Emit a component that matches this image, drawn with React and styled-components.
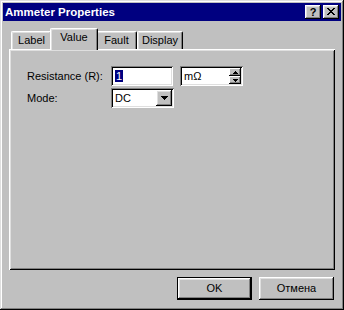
import React from 'react';
import styled, { createGlobalStyle } from 'styled-components';

const Global = createGlobalStyle`
  html, body { margin: 0; padding: 0; background: #c0c0c0; }
  body { font-family: "Liberation Sans", Arial, sans-serif; font-size: 11px; color: #000; }
  * { box-sizing: border-box; }
`;

const raisedShadow = 'inset -1px -1px #000, inset 1px 1px #fff, inset -2px -2px #808080, inset 2px 2px #dfdfdf';
const sunkenShadow = 'inset 1px 1px #808080, inset -1px -1px #fff, inset 2px 2px #000, inset -2px -2px #dfdfdf';

const Window = styled.div`
  width: 344px;
  height: 310px;
  padding: 3px;
  background: #c0c0c0;
  box-shadow: inset -1px -1px #000, inset 1px 1px #dfdfdf, inset -2px -2px #808080, inset 2px 2px #fff;
  display: flex;
  flex-direction: column;
`;

const TitleBar = styled.div`
  height: 18px;
  background: #000080;
  display: flex;
  align-items: center;
  padding: 0 2px;
  gap: 2px;
`;

const Title = styled.div`
  flex: 1;
  color: #fff;
  font-weight: bold;
  font-size: 11.5px;
  line-height: 18px;
  white-space: nowrap;
`;

const CaptionButton = styled.div`
  width: 16px;
  height: 14px;
  background: #c0c0c0;
  box-shadow: ${raisedShadow};
  display: flex;
  align-items: center;
  justify-content: center;
  font-weight: bold;
  font-size: 11px;
  line-height: 14px;
  padding-bottom: 1px;
`;

const Body = styled.div`
  flex: 1;
  display: flex;
  flex-direction: column;
  padding: 7px 6px 7px 6px;
`;

const TabStrip = styled.div`
  height: 21px;
  display: flex;
  align-items: flex-end;
  padding-left: 2px;
`;

const Tab = styled.div`
  position: relative;
  width: ${p => (p.$active ? p.$w + 4 : p.$w)}px;
  height: ${p => (p.$active ? 22 : 18)}px;
  margin: ${p => (p.$active ? '0 -2px -1px -2px' : '0')};
  z-index: ${p => (p.$active ? 2 : 1)};
  background: #c0c0c0;
  border-top: 1px solid #fff;
  border-left: 1px solid #fff;
  border-right: 1px solid #000;
  border-radius: 2px 2px 0 0;
  box-shadow: inset -1px 0 #808080, inset 1px 1px #dfdfdf;
  text-align: center;
  padding-top: 2px;
  line-height: 13px;
  white-space: nowrap;
`;

const Panel = styled.div`
  height: 221px;
  background: #c0c0c0;
  box-shadow: inset 1px 1px #fff, inset -1px -1px #000, inset 2px 2px #dfdfdf, inset -2px -2px #808080;
  padding: 17px 0 0 18px;
  display: flex;
  flex-direction: column;
  gap: 2px;
`;

const Row = styled.div`
  display: flex;
  align-items: center;
  height: 20px;
`;

const FieldLabel = styled.div`
  width: 84px;
  white-space: nowrap;
`;

const TextBox = styled.div`
  width: ${p => p.$w}px;
  height: 20px;
  background: #fff;
  box-shadow: ${sunkenShadow};
  padding: 2px;
  display: flex;
  align-items: center;
  margin-left: ${p => p.$ml || 0}px;
`;

const Selected = styled.span`
  background: #000080;
  color: #fff;
  line-height: 14px;
  padding: 0 1px;
`;

const FieldText = styled.span`
  flex: 1;
  padding-left: 2px;
  line-height: 14px;
  white-space: nowrap;
`;

const Spinner = styled.div`
  width: 12px;
  height: 16px;
  display: flex;
  flex-direction: column;
`;

const SpinButton = styled.div`
  height: 8px;
  background: #c0c0c0;
  box-shadow: inset -1px -1px #000, inset 1px 1px #fff, inset -2px -2px #808080;
  display: flex;
  align-items: center;
  justify-content: center;
`;

const DropButton = styled.div`
  width: 16px;
  height: 16px;
  background: #c0c0c0;
  box-shadow: ${raisedShadow};
  display: flex;
  align-items: center;
  justify-content: center;
`;

const Footer = styled.div`
  display: flex;
  justify-content: flex-end;
  gap: 7px;
  margin-top: 7px;
  padding-right: 1px;
`;

const Button = styled.div`
  width: 75px;
  height: 23px;
  background: #c0c0c0;
  border: ${p => (p.$default ? '1px solid #000' : 'none')};
  box-shadow: ${raisedShadow};
  display: flex;
  align-items: center;
  justify-content: center;
  line-height: 13px;
`;

const ArrowDown = ({ w = 7, h = 4 }) => (
  <svg width={w} height={h} viewBox={`0 0 ${w} ${h}`} shapeRendering="crispEdges">
    <polygon points={`0,0 ${w},0 ${w / 2},${h}`} fill="#000" />
  </svg>
);

const ArrowUp = ({ w = 5, h = 3 }) => (
  <svg width={w} height={h} viewBox={`0 0 ${w} ${h}`} shapeRendering="crispEdges">
    <polygon points={`0,${h} ${w},${h} ${w / 2},0`} fill="#000" />
  </svg>
);

const CloseGlyph = () => (
  <svg width="8" height="7" viewBox="0 0 8 7" shapeRendering="crispEdges">
    <path d="M0 0h2l2 2.3L6 0h2L5 3.5 8 7H6L4 4.7 2 7H0l3-3.5z" fill="#000" />
  </svg>
);

const tabs = [
  { label: 'Label', w: 41 },
  { label: 'Value', w: 44, active: true },
  { label: 'Fault', w: 41 },
  { label: 'Display', w: 46 },
];

export default function App() {
  return (
    <>
      <Global />
      <Window>
        <TitleBar>
          <Title>Ammeter Properties</Title>
          <CaptionButton>?</CaptionButton>
          <CaptionButton><CloseGlyph /></CaptionButton>
        </TitleBar>
        <Body>
          <TabStrip>
            {tabs.map(t => (
              <Tab key={t.label} $w={t.w} $active={t.active}>{t.label}</Tab>
            ))}
          </TabStrip>
          <Panel>
            <Row>
              <FieldLabel>Resistance (R):</FieldLabel>
              <TextBox $w={62}>
                <FieldText><Selected>1</Selected></FieldText>
              </TextBox>
              <TextBox $w={63} $ml={7}>
                <FieldText>mΩ</FieldText>
                <Spinner>
                  <SpinButton><ArrowUp /></SpinButton>
                  <SpinButton><ArrowDown w={5} h={3} /></SpinButton>
                </Spinner>
              </TextBox>
            </Row>
            <Row>
              <FieldLabel>Mode:</FieldLabel>
              <TextBox $w={63}>
                <FieldText>DC</FieldText>
                <DropButton><ArrowDown /></DropButton>
              </TextBox>
            </Row>
          </Panel>
          <Footer>
            <Button $default>OK</Button>
            <Button>Отмена</Button>
          </Footer>
        </Body>
      </Window>
    </>
  );
}
